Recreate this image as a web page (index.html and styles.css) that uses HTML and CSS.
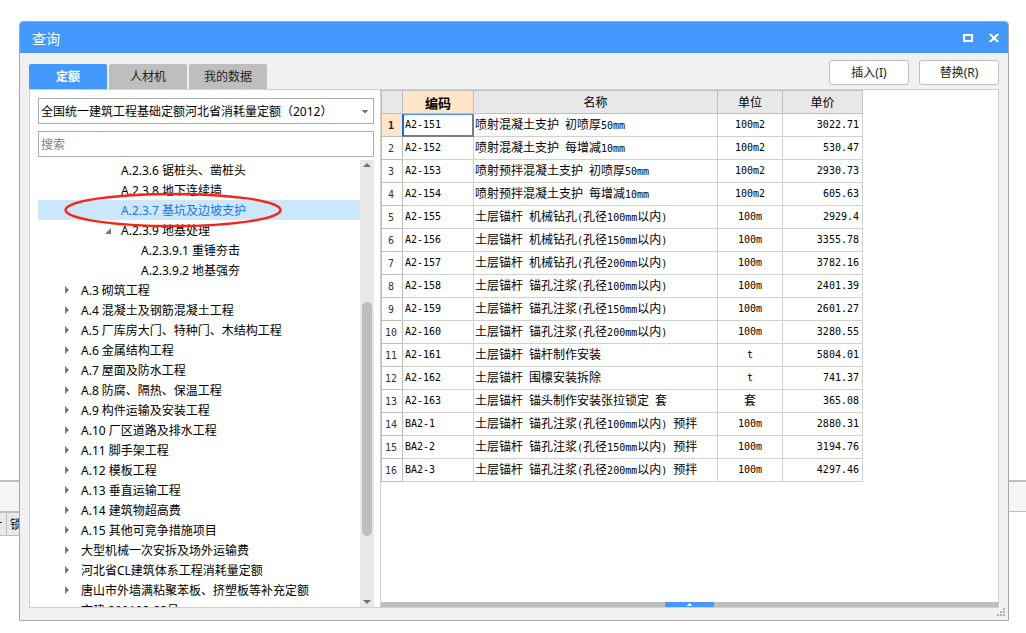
FILE: index.html
```html
<!DOCTYPE html>
<html lang="zh-CN">
<head>
<meta charset="utf-8">
<title>查询</title>
<link rel="stylesheet" href="styles.css">
</head>
<body>
<div class="backdrop" aria-hidden="true">
  <div class="band"></div>
  <div class="grid-head"><span class="grid-cell cut">计</span><span class="grid-cell">锁定</span></div>
</div>
<main class="dialog">
  <header class="titlebar">
    <h1 class="title">查询</h1>
    <button class="win-btn" aria-label="最大化"><svg width="10" height="8" viewBox="0 0 10 8"><path d="M1 1h8v6H1z" fill="none" stroke="#fff" stroke-width="2"/></svg></button>
    <button class="win-btn" aria-label="关闭"><svg width="10" height="8" viewBox="0 0 10 8" shape-rendering="crispEdges"><path d="M0 0h3v1h1v1h2V1h1V0h3v1H9v1H8v1H7v2h1v1h1v1h1v1H7V7H6V6H4v1H3v1H0V7h1V6h1V5h1V3H2V2H1V1H0z" fill="#fff"/></svg></button>
  </header>
  <div class="toolbar">
    <nav class="tabs">
      <button class="tab active">定额</button>
      <button class="tab">人材机</button>
      <button class="tab">我的数据</button>
    </nav>
    <div class="actions">
      <button class="action">插入(I)</button>
      <button class="action">替换(R)</button>
    </div>
  </div>
  <div class="content">
    <aside class="sidebar">
      <select class="field library" aria-label="定额库"><option>全国统一建筑工程基础定额河北省消耗量定额（2012）</option></select>
      <input class="field search" type="text" placeholder="搜索" aria-label="搜索">
      <div class="tree-wrap">
        <ul class="tree">
          <li class="node l3">A.2.3.6 锯桩头、凿桩头</li>
          <li class="node l3">A.2.3.8 地下连续墙</li>
          <li class="node l3 selected">A.2.3.7 基坑及边坡支护
            <svg class="mark" width="220" height="38" viewBox="0 0 220 38"><ellipse cx="110" cy="19" rx="107.500" ry="16" fill="none" stroke="#fb2414" stroke-width="2.4"/></svg>
          </li>
          <li class="node l3 open">A.2.3.9 地基处理</li>
          <li class="node l4">A.2.3.9.1 重锤夯击</li>
          <li class="node l4">A.2.3.9.2 地基强夯</li>
          <li class="node l1">A.3 砌筑工程</li>
          <li class="node l1">A.4 混凝土及钢筋混凝土工程</li>
          <li class="node l1">A.5 厂库房大门、特种门、木结构工程</li>
          <li class="node l1">A.6 金属结构工程</li>
          <li class="node l1">A.7 屋面及防水工程</li>
          <li class="node l1">A.8 防腐、隔热、保温工程</li>
          <li class="node l1">A.9 构件运输及安装工程</li>
          <li class="node l1">A.10 厂区道路及排水工程</li>
          <li class="node l1">A.11 脚手架工程</li>
          <li class="node l1">A.12 模板工程</li>
          <li class="node l1">A.13 垂直运输工程</li>
          <li class="node l1">A.14 建筑物超高费</li>
          <li class="node l1">A.15 其他可竞争措施项目</li>
          <li class="node l1">大型机械一次安拆及场外运输费</li>
          <li class="node l1">河北省CL建筑体系工程消耗量定额</li>
          <li class="node l1">唐山市外墙满粘聚苯板、挤塑板等补充定额</li>
          <li class="node l2">市建 200108-88号</li>
        </ul>
        <div class="scrollbar" aria-hidden="true">
          <span class="arrow"><svg width="8" height="4" viewBox="0 0 8 4"><path d="M0 4l4-4 4 4z" fill="#6e7178"/></svg></span>
          <span class="track-top"></span>
          <span class="thumb"></span>
          <span class="track-bottom"></span>
          <span class="arrow"><svg width="8" height="4" viewBox="0 0 8 4"><path d="M0 0l4 4 4-4z" fill="#6e7178"/></svg></span>
        </div>
      </div>
    </aside>
    <section class="results">
      <table class="grid">
        <colgroup><col class="c-no"><col class="c-code"><col class="c-name"><col class="c-unit"><col class="c-price"></colgroup>
        <thead><tr><th></th><th class="current">编码</th><th>名称</th><th>单位</th><th>单价</th></tr></thead>
        <tbody>
          <tr class="current-row"><th>1</th><td class="focus">A2-151</td><td>喷射混凝土支护<i> </i>初喷厚<i>50mm</i></td><td>100m2</td><td>3022.71</td></tr>
          <tr><th>2</th><td>A2-152</td><td>喷射混凝土支护<i> </i>每增减<i>10mm</i></td><td>100m2</td><td>530.47</td></tr>
          <tr><th>3</th><td>A2-153</td><td>喷射预拌混凝土支护<i> </i>初喷厚<i>50mm</i></td><td>100m2</td><td>2930.73</td></tr>
          <tr><th>4</th><td>A2-154</td><td>喷射预拌混凝土支护<i> </i>每增减<i>10mm</i></td><td>100m2</td><td>605.63</td></tr>
          <tr><th>5</th><td>A2-155</td><td>土层锚杆<i> </i>机械钻孔<i>(</i>孔径<i>100mm</i>以内<i>)</i></td><td>100m</td><td>2929.4</td></tr>
          <tr><th>6</th><td>A2-156</td><td>土层锚杆<i> </i>机械钻孔<i>(</i>孔径<i>150mm</i>以内<i>)</i></td><td>100m</td><td>3355.78</td></tr>
          <tr><th>7</th><td>A2-157</td><td>土层锚杆<i> </i>机械钻孔<i>(</i>孔径<i>200mm</i>以内<i>)</i></td><td>100m</td><td>3782.16</td></tr>
          <tr><th>8</th><td>A2-158</td><td>土层锚杆<i> </i>锚孔注浆<i>(</i>孔径<i>100mm</i>以内<i>)</i></td><td>100m</td><td>2401.39</td></tr>
          <tr><th>9</th><td>A2-159</td><td>土层锚杆<i> </i>锚孔注浆<i>(</i>孔径<i>150mm</i>以内<i>)</i></td><td>100m</td><td>2601.27</td></tr>
          <tr><th>10</th><td>A2-160</td><td>土层锚杆<i> </i>锚孔注浆<i>(</i>孔径<i>200mm</i>以内<i>)</i></td><td>100m</td><td>3280.55</td></tr>
          <tr><th>11</th><td>A2-161</td><td>土层锚杆<i> </i>锚杆制作安装</td><td>t</td><td>5804.01</td></tr>
          <tr><th>12</th><td>A2-162</td><td>土层锚杆<i> </i>围檩安装拆除</td><td>t</td><td>741.37</td></tr>
          <tr><th>13</th><td>A2-163</td><td>土层锚杆<i> </i>锚头制作安装张拉锁定<i> </i>套</td><td class="han">套</td><td>365.08</td></tr>
          <tr><th>14</th><td>BA2-1</td><td>土层锚杆<i> </i>锚孔注浆<i>(</i>孔径<i>100mm</i>以内<i>) </i>预拌</td><td>100m</td><td>2880.31</td></tr>
          <tr><th>15</th><td>BA2-2</td><td>土层锚杆<i> </i>锚孔注浆<i>(</i>孔径<i>150mm</i>以内<i>) </i>预拌</td><td>100m</td><td>3194.76</td></tr>
          <tr><th>16</th><td>BA2-3</td><td>土层锚杆<i> </i>锚孔注浆<i>(</i>孔径<i>200mm</i>以内<i>) </i>预拌</td><td>100m</td><td>4297.46</td></tr>
        </tbody>
      </table>
      <div class="splitter"><button class="expand" aria-label="展开"><svg width="5" height="3" viewBox="0 0 5 3"><path d="M0 3v-1h1v-1h1v-1h1v1h1v1h1v1z" fill="#fff"/></svg></button></div>
    </section>
  </div>
  <svg class="grip" width="8" height="8" viewBox="0 0 8 8" aria-hidden="true"><path d="M6 0h2v2H6zM3 3h2v2H3zM6 3h2v2H6zM0 6h2v2H0zM3 6h2v2H3zM6 6h2v2H6z" fill="#b0b0b0"/></svg>
</main>
</body>
</html>
```
FILE: styles.css
```css
* { box-sizing: border-box; }

body {
  margin: 0;
  height: 100vh;
  padding: 21px 17px 12px 19px;
  position: relative;
  overflow: hidden;
  background: #fff;
  color: #000;
  font: 12px/20px "Noto Sans", "Noto Sans CJK SC", sans-serif;
}

button, input, select { font: inherit; color: inherit; margin: 0; }
button { padding: 0; border: 0; background: none; }
svg { display: block; }

/* Parent window showing behind the dialog */
.backdrop { position: absolute; left: 0; right: 0; top: 480px; }
.band { height: 32px; border-top: 2px solid #bebebe; border-bottom: 1px solid #bebebe; background: #f5f5f5; }
.grid-head { display: flex; width: 50px; height: 24px; border: solid #bebebe; border-width: 1px 0; background: #e8e8e8; }
.grid-cell { flex: none; width: 44px; padding-left: 3px; border-left: 1px solid #bebebe; line-height: 24px; white-space: nowrap; }
.grid-cell.cut { width: 6px; padding: 0 4px 0 0; border: 0; overflow: hidden; direction: rtl; }

.dialog {
  position: relative;
  display: flex;
  flex-direction: column;
  height: 100%;
  border: 1px solid #a8a8a8;
  border-radius: 4px 4px 0 0;
  background: #f1f1f1;
}

.titlebar {
  display: flex;
  align-items: center;
  gap: 16px;
  flex: none;
  height: 31px;
  padding: 0 9px 0 12px;
  border-radius: 3px 3px 0 0;
  background: #4499ff;
  color: #fff;
}
.title { flex: 1; margin: 0; padding-top: 3px; font-size: 14px; font-weight: 400; }

.toolbar { display: flex; justify-content: space-between; flex: none; height: 36px; padding: 7px 9px 0; }
.tabs { display: flex; align-items: flex-end; gap: 2px; }
.tab { width: 78px; height: 25px; border-radius: 2px 2px 0 0; background: #bebebe; color: #222; }
.tab.active { background: #4499ff; color: #fff; font-weight: 700; }
.actions { display: flex; gap: 10px; }
.action { width: 80px; height: 25px; border: 1px solid #bebebe; border-radius: 3px; background: #fff; color: #222; }

.content {
  display: flex;
  flex: 1;
  min-height: 0;
  margin: 0 9px 12px;
  border: 1px solid #d0d0d0;
  background: #fff;
}

.sidebar { display: flex; flex-direction: column; flex: none; width: 350px; padding: 8px 6px 0 8px; }
.field { width: 100%; height: 26px; padding: 0 2px; border: 1px solid #acacac; border-radius: 0; background: #fff; outline: 0; }
.library {
  padding-top: 2px;
  appearance: none;
  background: linear-gradient(#777, #777) calc(100% - 5px) 11px / 6px 1px no-repeat, linear-gradient(#777, #777) calc(100% - 6px) 12px / 4px 1px no-repeat, linear-gradient(#777, #777) calc(100% - 7px) 13px / 2px 1px no-repeat, #fff;
}
.search { margin-top: 7px; }
.search::placeholder { color: #808080; opacity: 1; }

.tree-wrap { display: flex; flex: 1; min-height: 0; margin-top: 3px; }
.tree { flex: 1; margin: 0; padding: 0; overflow: hidden; list-style: none; line-height: 22px; white-space: nowrap; }
.node { position: relative; height: 20px; }
.l1, .l2 { padding-left: 43px; }
.l3 { padding-left: 83px; }
.l4 { padding-left: 103px; }
.l1::before { content: ""; position: absolute; left: 27px; top: 6px; border: 4px solid transparent; border-left-color: #777; border-right: 0; }
.open::before { content: ""; position: absolute; left: 67px; top: 8px; width: 6px; height: 6px; background: #777; clip-path: polygon(100% 0, 100% 100%, 0 100%); }
.selected { z-index: 1; background: #cce8ff; color: #1a73e8; }
.mark { position: absolute; left: 25px; top: -9px; }

.scrollbar { display: flex; flex-direction: column; flex: none; width: 14px; background: #e8e8e8; }
.arrow { display: flex; align-items: center; justify-content: center; flex: none; height: 10px; }
.track-top { flex: 132; }
.thumb { flex: 234; width: 10px; margin: 0 2px; border-radius: 5px; background: #bebebe; }
.track-bottom { flex: 61; }

.results { display: flex; flex-direction: column; flex: 1; min-width: 0; border-left: 1px solid #d0d0d0; }
.grid {
  flex: none;
  width: 482px;
  table-layout: fixed;
  border-collapse: separate;
  border-spacing: 0;
  border-top: 1px solid #bebebe;
  border-left: 1px solid #bebebe;
}
.c-no { width: 21px; }
.c-code { width: 71px; }
.c-name { width: 244px; }
.c-unit { width: 65px; }
.c-price { width: 80px; }
.grid th, .grid td { height: 23px; padding: 0 2px; border: solid #d0d0d0; border-width: 0 1px 1px 0; line-height: 20px; white-space: nowrap; overflow: hidden; }
.grid th { border-color: #bebebe; font-weight: 400; text-align: center; }
.grid thead th { padding-top: 1px; background: #e8e8e8; }
.grid thead .current { background: #ffe6c8; font-size: 13px; font-weight: 700; }
.grid tbody th { padding: 2px 2px 0 0; line-height: 18px; color: #333; font-family: "DejaVu Sans Mono", monospace; font-size: 10px; }
.grid .current-row th { background: #ffe6c8; border-right-color: #1166ee; color: #222; font-weight: 700; }
.grid td, .grid i { font-family: "DejaVu Sans Mono", "Noto Sans CJK SC", monospace; font-size: 10px; font-style: normal; }
.grid i { white-space: pre; }
.grid td:nth-child(3) { padding-left: 1px; font: 12px/20px "Noto Sans CJK SC", sans-serif; }
.grid td:nth-child(4) { text-align: center; }
.grid .han { font-size: 12px; }
.grid td:nth-child(5) { padding-right: 3px; text-align: right; }
.grid .focus { padding: 0 1px; border: solid #7d7d7d; border-width: 1px 2px 2px 1px; border-left-color: #1166ee; border-top-color: #4499ff; }

.splitter { display: flex; justify-content: center; flex: none; height: 5px; margin-top: auto; background: #bebebe; }
.expand { display: flex; align-items: center; justify-content: center; width: 49px; height: 5px; background: #4499ff; }
.grip { position: absolute; right: 3px; bottom: 4px; }
```
